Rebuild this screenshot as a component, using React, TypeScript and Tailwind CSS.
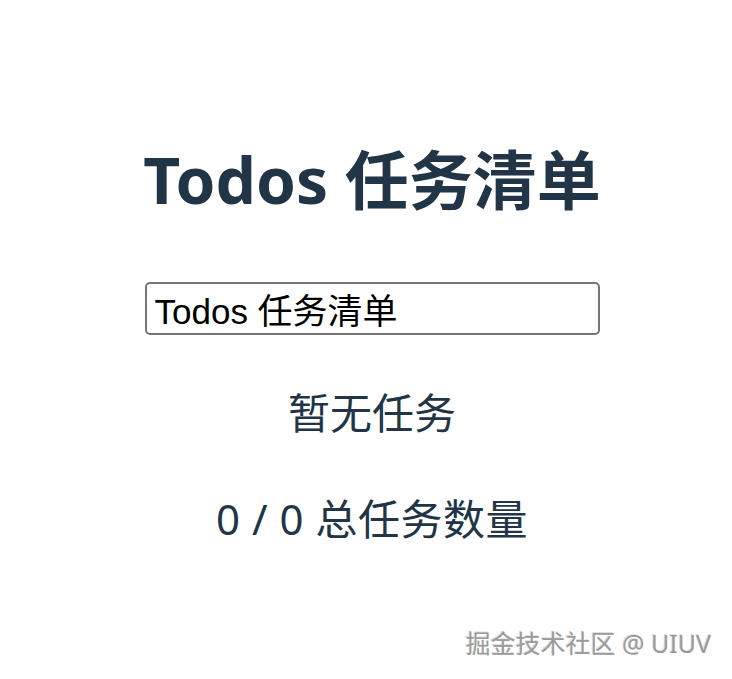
export default function App() {
  return (
    <div className="relative h-[679px] w-[732px] overflow-hidden bg-white" style={{ fontFamily: '"Noto Sans", "Noto Sans CJK SC", sans-serif' }}>
      <div className="flex flex-col items-center pl-[12px] pt-[140px] text-[#213547]">
        <h1 className="h-[80px] text-[64px] font-bold leading-[80px] tracking-[0px]">Todos 任务清单</h1>
        <input
          defaultValue="Todos 任务清单"
          className="mt-[62px] h-[53px] w-[455px] rounded-[5px] border-2 border-[#767676] px-[8px] text-[35px] text-black outline-none"
          style={{ fontFamily: '"Liberation Sans", "Noto Sans CJK SC", sans-serif' }}
        />
        <p className="mt-[50px] h-[56px] text-[42px] leading-[56px]">暂无任务</p>
        <p className="mt-[50px] h-[56px] text-[42px] leading-[56px] tracking-[0.5px]">0 / 0 总任务数量</p>
      </div>
      <div
        className="absolute right-[21px] top-[627px] text-[25px] leading-[32px] text-[#9a9a9a]"
        style={{ textShadow: '1px 1px 0 #ffffff, -1px -1px 0 #e0e0e0', fontFamily: '"Noto Sans", "Noto Sans CJK SC", sans-serif' }}
      >
        掘金技术社区 @ UIUV
      </div>
    </div>
  );
}
